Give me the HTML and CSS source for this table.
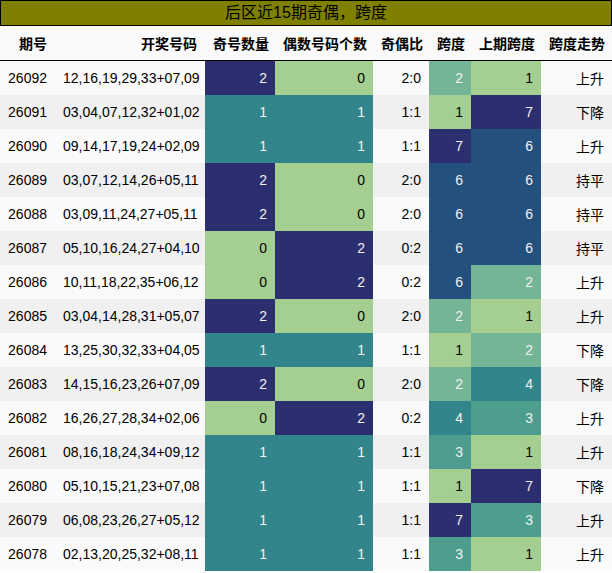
FILE: index.html
```html
<!DOCTYPE html>
<html lang="zh">
<head>
<meta charset="utf-8">
<link rel="stylesheet" href="styles.css">
</head>
<body>
<div class="title">后区近15期奇偶，跨度</div>
<table class="grid">
<colgroup>
<col class="w1"><col class="w2"><col class="w3"><col class="w4"><col class="w5"><col class="w6"><col class="w7"><col class="w8">
</colgroup>
<thead>
<tr><th>期号</th><th>开奖号码</th><th>奇号数量</th><th>偶数号码个数</th><th>奇偶比</th><th>跨度</th><th>上期跨度</th><th>跨度走势</th></tr>
</thead>
<tbody>
<tr><td>26092</td><td>12,16,19,29,33+07,09</td><td class="navy">2</td><td class="lime">0</td><td>2:0</td><td class="mint">2</td><td class="lime">1</td><td>上升</td></tr>
<tr><td>26091</td><td>03,04,07,12,32+01,02</td><td class="teal">1</td><td class="teal">1</td><td>1:1</td><td class="lime">1</td><td class="navy">7</td><td>下降</td></tr>
<tr><td>26090</td><td>09,14,17,19,24+02,09</td><td class="teal">1</td><td class="teal">1</td><td>1:1</td><td class="navy">7</td><td class="blue">6</td><td>上升</td></tr>
<tr><td>26089</td><td>03,07,12,14,26+05,11</td><td class="navy">2</td><td class="lime">0</td><td>2:0</td><td class="blue">6</td><td class="blue">6</td><td>持平</td></tr>
<tr><td>26088</td><td>03,09,11,24,27+05,11</td><td class="navy">2</td><td class="lime">0</td><td>2:0</td><td class="blue">6</td><td class="blue">6</td><td>持平</td></tr>
<tr><td>26087</td><td>05,10,16,24,27+04,10</td><td class="lime">0</td><td class="navy">2</td><td>0:2</td><td class="blue">6</td><td class="blue">6</td><td>持平</td></tr>
<tr><td>26086</td><td>10,11,18,22,35+06,12</td><td class="lime">0</td><td class="navy">2</td><td>0:2</td><td class="blue">6</td><td class="mint">2</td><td>上升</td></tr>
<tr><td>26085</td><td>03,04,14,28,31+05,07</td><td class="navy">2</td><td class="lime">0</td><td>2:0</td><td class="mint">2</td><td class="lime">1</td><td>上升</td></tr>
<tr><td>26084</td><td>13,25,30,32,33+04,05</td><td class="teal">1</td><td class="teal">1</td><td>1:1</td><td class="lime">1</td><td class="mint">2</td><td>下降</td></tr>
<tr><td>26083</td><td>14,15,16,23,26+07,09</td><td class="navy">2</td><td class="lime">0</td><td>2:0</td><td class="mint">2</td><td class="teal">4</td><td>下降</td></tr>
<tr><td>26082</td><td>16,26,27,28,34+02,06</td><td class="lime">0</td><td class="navy">2</td><td>0:2</td><td class="teal">4</td><td class="sea">3</td><td>上升</td></tr>
<tr><td>26081</td><td>08,16,18,24,34+09,12</td><td class="teal">1</td><td class="teal">1</td><td>1:1</td><td class="sea">3</td><td class="lime">1</td><td>上升</td></tr>
<tr><td>26080</td><td>05,10,15,21,23+07,08</td><td class="teal">1</td><td class="teal">1</td><td>1:1</td><td class="lime">1</td><td class="navy">7</td><td>下降</td></tr>
<tr><td>26079</td><td>06,08,23,26,27+05,12</td><td class="teal">1</td><td class="teal">1</td><td>1:1</td><td class="navy">7</td><td class="sea">3</td><td>上升</td></tr>
<tr><td>26078</td><td>02,13,20,25,32+08,11</td><td class="teal">1</td><td class="teal">1</td><td>1:1</td><td class="sea">3</td><td class="lime">1</td><td>上升</td></tr>
</tbody>
</table>
</body>
</html>
```
FILE: styles.css
```css
html, body {
  margin: 0;
  padding: 0;
  background: #ffffff;
}
body {
  font-family: "Liberation Sans", "Noto Sans CJK SC", sans-serif;
  font-size: 14px;
  color: #000;
}
.title {
  box-sizing: border-box;
  width: 612px;
  height: 26px;
  border: 1px solid #000;
  background: #808000;
  font-size: 16px;
  line-height: 24px;
  text-align: center;
  color: #000;
}
.grid {
  border-collapse: collapse;
  border-spacing: 0;
  width: 612px;
  table-layout: fixed;
}
.w1 { width: 55px; }
.w2 { width: 150px; }
.w3 { width: 70px; }
.w4 { width: 98px; }
.w5 { width: 56px; }
.w6 { width: 42px; }
.w7 { width: 70px; }
.w8 { width: 71px; }
.grid th, .grid td {
  padding: 0 8px;
  text-align: right;
  white-space: nowrap;
  overflow: hidden;
}
.grid th {
  height: 34px;
  font-weight: bold;
  background: #fafafa;
  border-bottom: 1px solid #000;
}
.grid td {
  height: 34px;
}
.grid tbody tr:nth-child(odd) { background: #fafafa; }
.grid tbody tr:nth-child(even) { background: #f0f0f0; }
.grid td.navy { background: #2c2f6f; color: #f1f1f1; }
.grid td.blue { background: #24507e; color: #f1f1f1; }
.grid td.teal { background: #32868b; color: #f1f1f1; }
.grid td.sea { background: #4e9e8f; color: #f1f1f1; }
.grid td.mint { background: #74b596; color: #f1f1f1; }
.grid td.lime { background: #a5cf91; color: #000; }
```
